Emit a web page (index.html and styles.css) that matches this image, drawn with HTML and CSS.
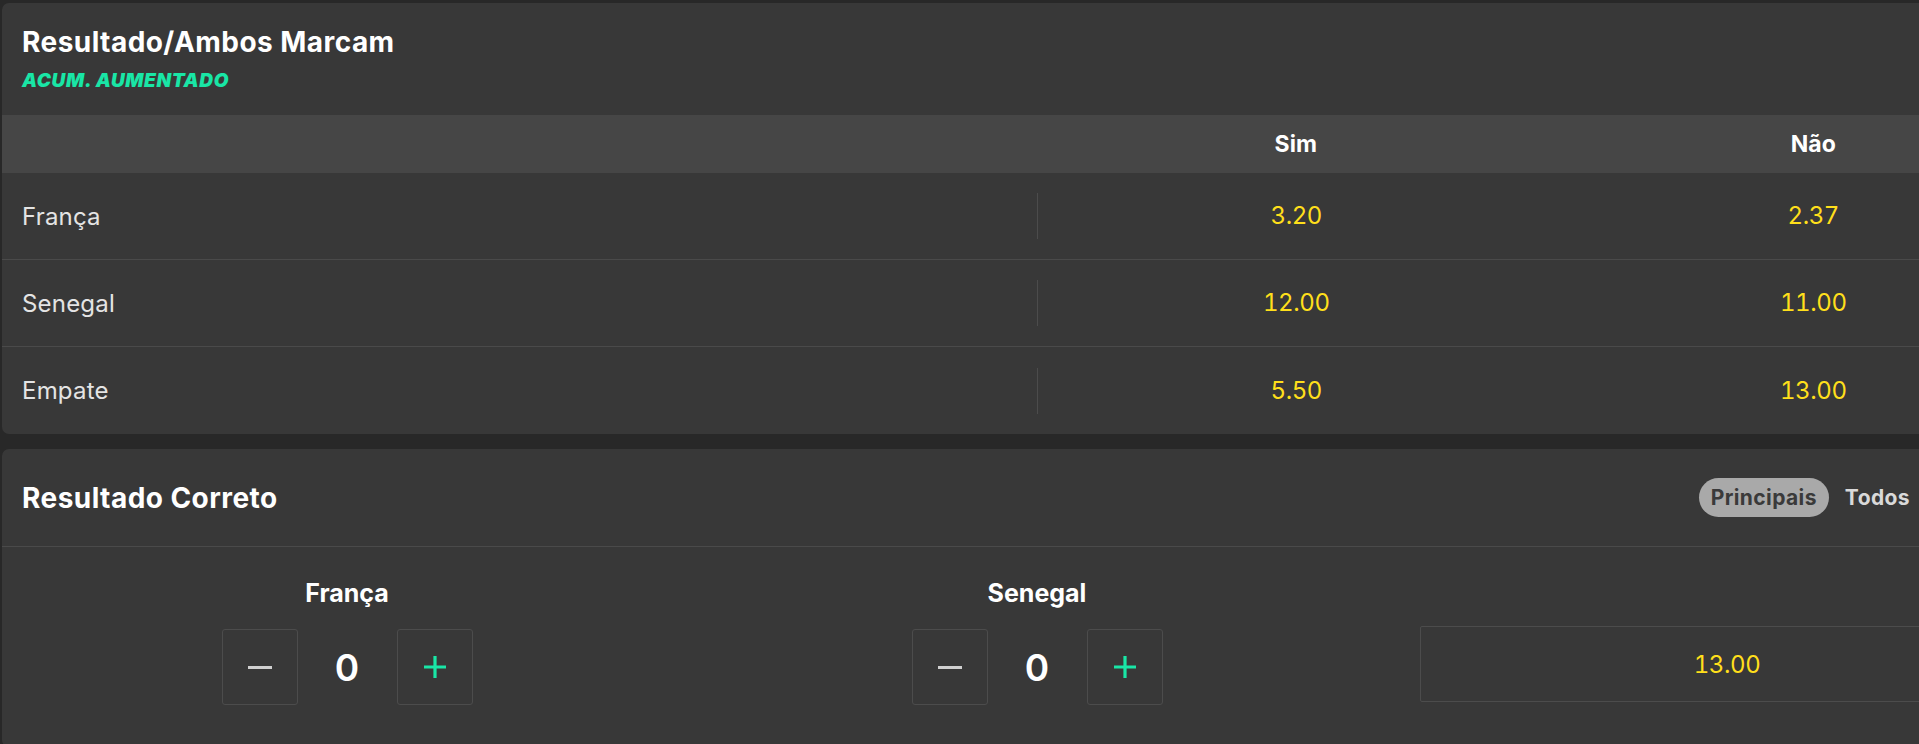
FILE: index.html
```
<!DOCTYPE html>
<html lang="pt">
<head>
<meta charset="utf-8">
<title>Mercados</title>
<link rel="stylesheet" href="styles.css">
</head>
<body>
<div class="page">
  <section class="card">
    <div class="card-head">
      <h2 class="title">Resultado/Ambos Marcam</h2>
      <div class="boost">ACUM. AUMENTADO</div>
    </div>
    <div class="grid header-row">
      <div></div>
      <div class="col-h">Sim</div>
      <div class="col-h">Não</div>
    </div>
    <div class="grid row">
      <div class="label">França</div>
      <div class="odd first">3.20</div>
      <div class="odd">2.37</div>
    </div>
    <div class="grid row">
      <div class="label">Senegal</div>
      <div class="odd first">12.00</div>
      <div class="odd">11.00</div>
    </div>
    <div class="grid row last">
      <div class="label">Empate</div>
      <div class="odd first">5.50</div>
      <div class="odd">13.00</div>
    </div>
  </section>

  <section class="card">
    <div class="cs-head">
      <h2 class="title">Resultado Correto</h2>
      <div class="filters">
        <span class="pill active">Principais</span>
        <span class="pill">Todos</span>
      </div>
    </div>
    <div class="cs-body">
      <div class="team">
        <div class="team-name">França</div>
        <div class="stepper">
          <span class="step-btn"><span class="minus"></span></span>
          <span class="score">0</span>
          <span class="step-btn"><svg class="plus" viewBox="0 0 24 24" width="24" height="24"><path d="M12 1v22M1 12h22" stroke="#19e6a6" stroke-width="3.2" fill="none"/></svg></span>
        </div>
      </div>
      <div class="team">
        <div class="team-name">Senegal</div>
        <div class="stepper">
          <span class="step-btn"><span class="minus"></span></span>
          <span class="score">0</span>
          <span class="step-btn"><svg class="plus" viewBox="0 0 24 24" width="24" height="24"><path d="M12 1v22M1 12h22" stroke="#19e6a6" stroke-width="3.2" fill="none"/></svg></span>
        </div>
      </div>
      <div class="result">
        <div class="result-box">13.00</div>
      </div>
    </div>
  </section>
</div>
</body>
</html>
```
FILE: styles.css
```
* { box-sizing: border-box; }
html, body { margin: 0; padding: 0; }
body {
  background: #282828;
  font-family: Inter, Roboto, "Noto Sans", sans-serif;
  color: #fff;
  overflow: hidden;
  width: 1919px;
  height: 744px;
}
.page {
  display: flex;
  flex-direction: column;
  gap: 15px;
  padding: 3px 0 0 2px;
  width: 2080px;
}
.card {
  background: #383838;
  border-radius: 7px;
  width: 2070px;
  overflow: hidden;
}
.card-head {
  height: 112px;
  padding: 22px 20px 0;
}
.title {
  margin: 0;
  font-size: 28px;
  line-height: 34px;
  font-weight: 700;
  letter-spacing: 0.45px;
  color: #fff;
}
.boost {
  margin-top: 11px;
  font-size: 19px;
  line-height: 22px;
  font-weight: 900;
  font-style: italic;
  color: #19e6a6;
  letter-spacing: 0.6px;
}
.grid {
  display: grid;
  grid-template-columns: 50% 25% 25%;
}
.header-row {
  height: 58px;
  background: #464646;
  align-items: center;
}
.col-h {
  text-align: center;
  font-size: 23px;
  font-weight: 700;
  color: #fff;
}
.row {
  height: 87px;
  border-bottom: 1px solid #4a4a4a;
  align-items: center;
}
.row.last { border-bottom: none; }
.label {
  padding-left: 20px;
  font-size: 24px;
  letter-spacing: 0.2px;
  color: #e4e4e4;
}
.odd {
  text-align: center;
  font-size: 24px;
  font-variant-numeric: tabular-nums;
  letter-spacing: -0.4px;
  color: #ffdf1b;
  height: 46px;
  line-height: 46px;
}
.odd.first { border-left: 1px solid #4c4c4c; }

.cs-head {
  height: 98px;
  display: flex;
  align-items: center;
  justify-content: space-between;
  padding: 0 150px 0 20px;
  border-bottom: 1px solid #4a4a4a;
}
.filters { display: flex; gap: 4px; align-items: center; }
.pill {
  height: 39px;
  line-height: 39px;
  padding: 0 12px;
  border-radius: 20px;
  font-size: 21px;
  font-weight: 700;
  letter-spacing: 0.4px;
  color: #d9d9d9;
}
.pill.active {
  background: #a9a9a9;
  color: #3a3a3a;
}
.cs-body {
  display: grid;
  grid-template-columns: 1fr 1fr 1fr;
  height: 200px;
}
.team {
  display: flex;
  flex-direction: column;
  align-items: center;
  padding-top: 31px;
}
.team-name {
  font-size: 25px;
  line-height: 30px;
  font-weight: 700;
  color: #fff;
}
.stepper {
  margin-top: 21px;
  display: flex;
  align-items: center;
}
.step-btn {
  width: 76px;
  height: 76px;
  border: 1px solid #4c4c4c;
  border-radius: 3px;
  display: flex;
  align-items: center;
  justify-content: center;
}
.minus {
  width: 24px;
  height: 3px;
  background: #d0d0d0;
}
.score {
  width: 99px;
  text-align: center;
  font-size: 37px;
  font-weight: 600;
  color: #fff;
}
.result {
  padding: 79px 38px 0;
}
.result-box {
  height: 76px;
  border: 1px solid #4c4c4c;
  border-radius: 2px;
  display: flex;
  align-items: center;
  justify-content: center;
  font-size: 24px;
  font-variant-numeric: tabular-nums;
  letter-spacing: -0.4px;
  color: #ffdf1b;
}
```
